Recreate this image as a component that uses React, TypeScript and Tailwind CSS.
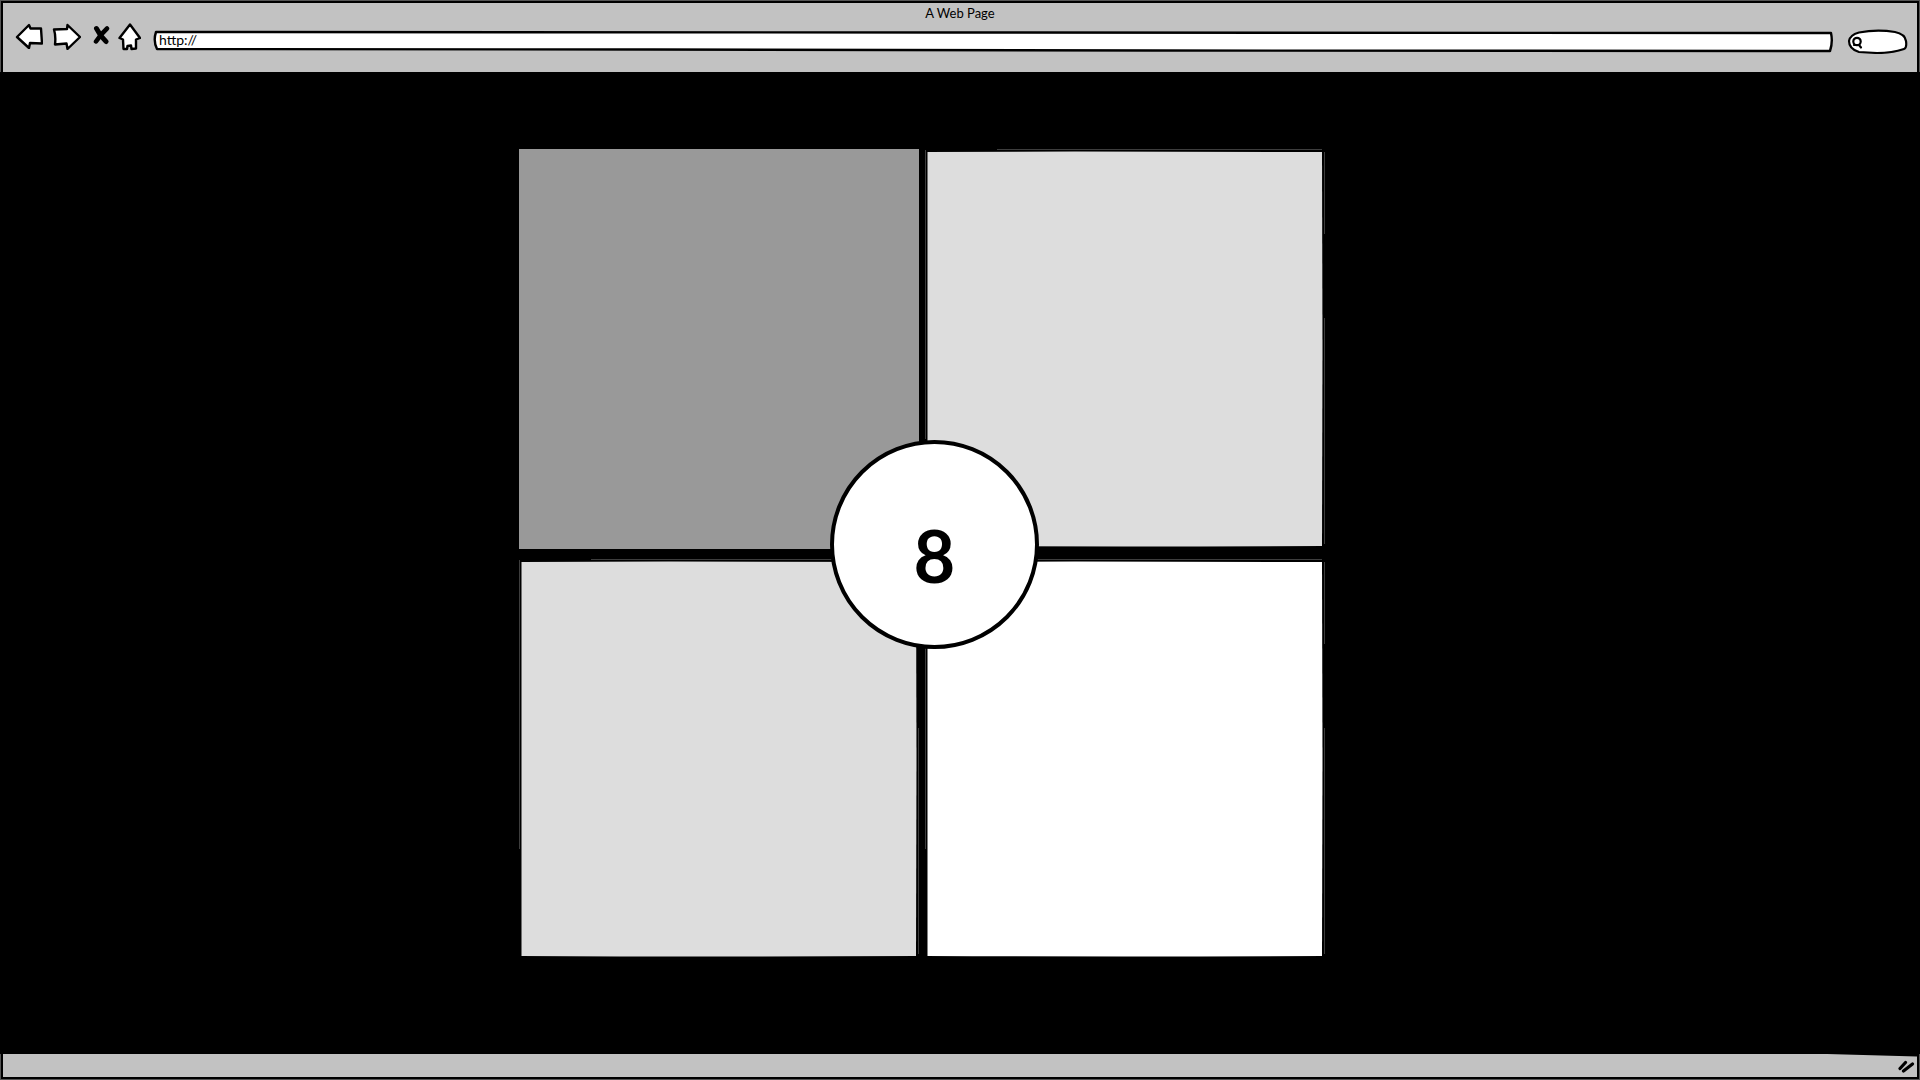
import React from 'react';

function NavIcon({ label, path, box, className }: { label: string; path: React.ReactNode; box: string; className: string }) {
  return (
    <button type="button" aria-label={label} className={className}>
      <svg viewBox={box} className="block h-full w-full" stroke="#000" strokeWidth="2.4" strokeLinejoin="round" strokeLinecap="round" fill="#fff">
        {path}
      </svg>
    </button>
  );
}

function SketchTile({ fill }: { fill: string }) {
  return (
    <div className="aspect-square">
      <svg viewBox="0 0 400 400" className={`block h-full w-full ${fill}`}>
        <path d="M2.500 3 L150 2.500 L397 3 L397.500 200 L397 397 Q200 398 2.500 397 Z" />
        <g fill="none" stroke="#3d3d3d" strokeWidth="1">
          <path d="M0.500 1 V290" />
          <path d="M72 0.500 H397" />
          <path d="M399.500 3 V85 M399.500 169 V395" />
        </g>
      </svg>
    </div>
  );
}

export default function App() {
  return (
    <div className="flex min-h-screen flex-col bg-black font-['Lato',sans-serif] text-black">
      <header className="border-x border-t border-[#555]">
        <div className="border-x-2 border-t-2 border-black bg-[#c2c2c2]">
          <h1 className="pt-[2px] text-center text-[13px] leading-[16px]">A Web Page</h1>
          <div className="flex h-[51px] items-start pr-[9px] pl-[12px]">
            <NavIcon label="Back" box="0 0 28 26" className="mt-[2px] h-[26px] w-[28px]"
              path={<path d="M2 14 L14 2 L15.500 5.500 L26 5.500 L27 20.500 L15 20 L14 25 Z" />} />
            <NavIcon label="Forward" box="0 0 29 27" className="mt-[2px] ml-[9px] h-[27px] w-[29px]"
              path={<path d="M2 6.500 L15 6 L15.500 2 L28 14 L15.500 26 L14.500 20.500 L3 21.500 Q4 13 2 6.500 Z" />} />
            <NavIcon label="Stop" box="0 0 17 20" className="mt-[4px] ml-[12px] h-[20px] w-[17px]"
              path={
                <>
                  <path d="M3.500 3.500 Q7 11 13 16.500" strokeWidth="5" fill="none" />
                  <path d="M14 3.500 Q8 9 3 16.500" strokeWidth="4.500" fill="none" />
                </>
              } />
            <NavIcon label="Home" box="0 0 23 28" className="mt-[2px] ml-[8px] h-[28px] w-[23px]"
              path={<path d="M12 1.500 L1.500 15 L5 16.500 L5.500 26 L9 26 L9.500 23 L13 22.500 L13.500 26 L18 25.500 L18 16.500 L22 15 Z" />} />
            <div className="relative mt-[10px] ml-[12px] h-[20px] flex-1">
              <svg viewBox="0 0 1680 20" preserveAspectRatio="none" className="absolute inset-0 h-full w-full overflow-visible" fill="#fff" stroke="#000" strokeWidth="2.400" strokeLinejoin="round">
                <path d="M3 1 L800 1.500 L1678 2 Q1680 11 1677 20 L1000 19.500 L500 18.500 L4 18 Q0 10 3 1 Z" />
              </svg>
              <input aria-label="Address" defaultValue="http://" className="absolute inset-x-0 top-0 h-[18px] w-full bg-transparent px-[6px] text-[14px] leading-[18px] outline-none" />
            </div>
            <div className="relative mt-[8px] ml-[14px] h-[25px] w-[61px]">
              <svg viewBox="0 0 61 25" className="absolute inset-0 h-full w-full" fill="#fff" stroke="#000" strokeWidth="2.200" strokeLinecap="round">
                <path d="M12 3.500 Q30 0 48 3 Q58 5 59 12 Q60 19 57 20 Q45 24 30 24 L12 23 Q2 20 2 12 Q3 6 12 3.500 Z" />
                <circle cx="10" cy="12.500" r="3.700" />
                <path d="M7 16 H12 L14 18.500" fill="none" />
              </svg>
              <input type="search" aria-label="Search" className="absolute inset-y-0 left-[16px] w-[40px] bg-transparent text-[14px] outline-none" />
            </div>
          </div>
        </div>
      </header>

      <main className="flex flex-1 justify-center bg-black pt-[77px] pr-[76px] pb-[95px]">
        <div className="relative grid w-[806px] grid-cols-2 content-start gap-x-[6px] gap-y-[10px]">
          <div className="aspect-square bg-[#999]" />
          <SketchTile fill="fill-[#ddd]" />
          <SketchTile fill="fill-[#ddd]" />
          <SketchTile fill="fill-white" />
          <div className="absolute top-[291px] left-[311px] flex h-[209px] w-[209px] items-center justify-center rounded-full border-4 border-black bg-white pt-[20px]">
            <span className="text-[72px] leading-none font-bold">8</span>
          </div>
        </div>
      </main>

      <footer className="border-x border-b border-[#555]">
        <div className="relative flex h-[25px] items-center justify-end border-x-2 border-b-2 border-black bg-[#c2c2c2] pr-[2px]">
          <svg viewBox="0 0 90 3" className="absolute top-0 right-0 h-[3px] w-[90px]">
            <path d="M0 0 H90 V2.500 Z" />
          </svg>
          <svg viewBox="0 0 17 14" className="h-[14px] w-[17px]" stroke="#000" strokeWidth="3.200" strokeLinecap="round">
            <path d="M2 9.500 L7.500 3.500 M5.500 12 L14.500 5" />
          </svg>
        </div>
      </footer>
    </div>
  );
}
